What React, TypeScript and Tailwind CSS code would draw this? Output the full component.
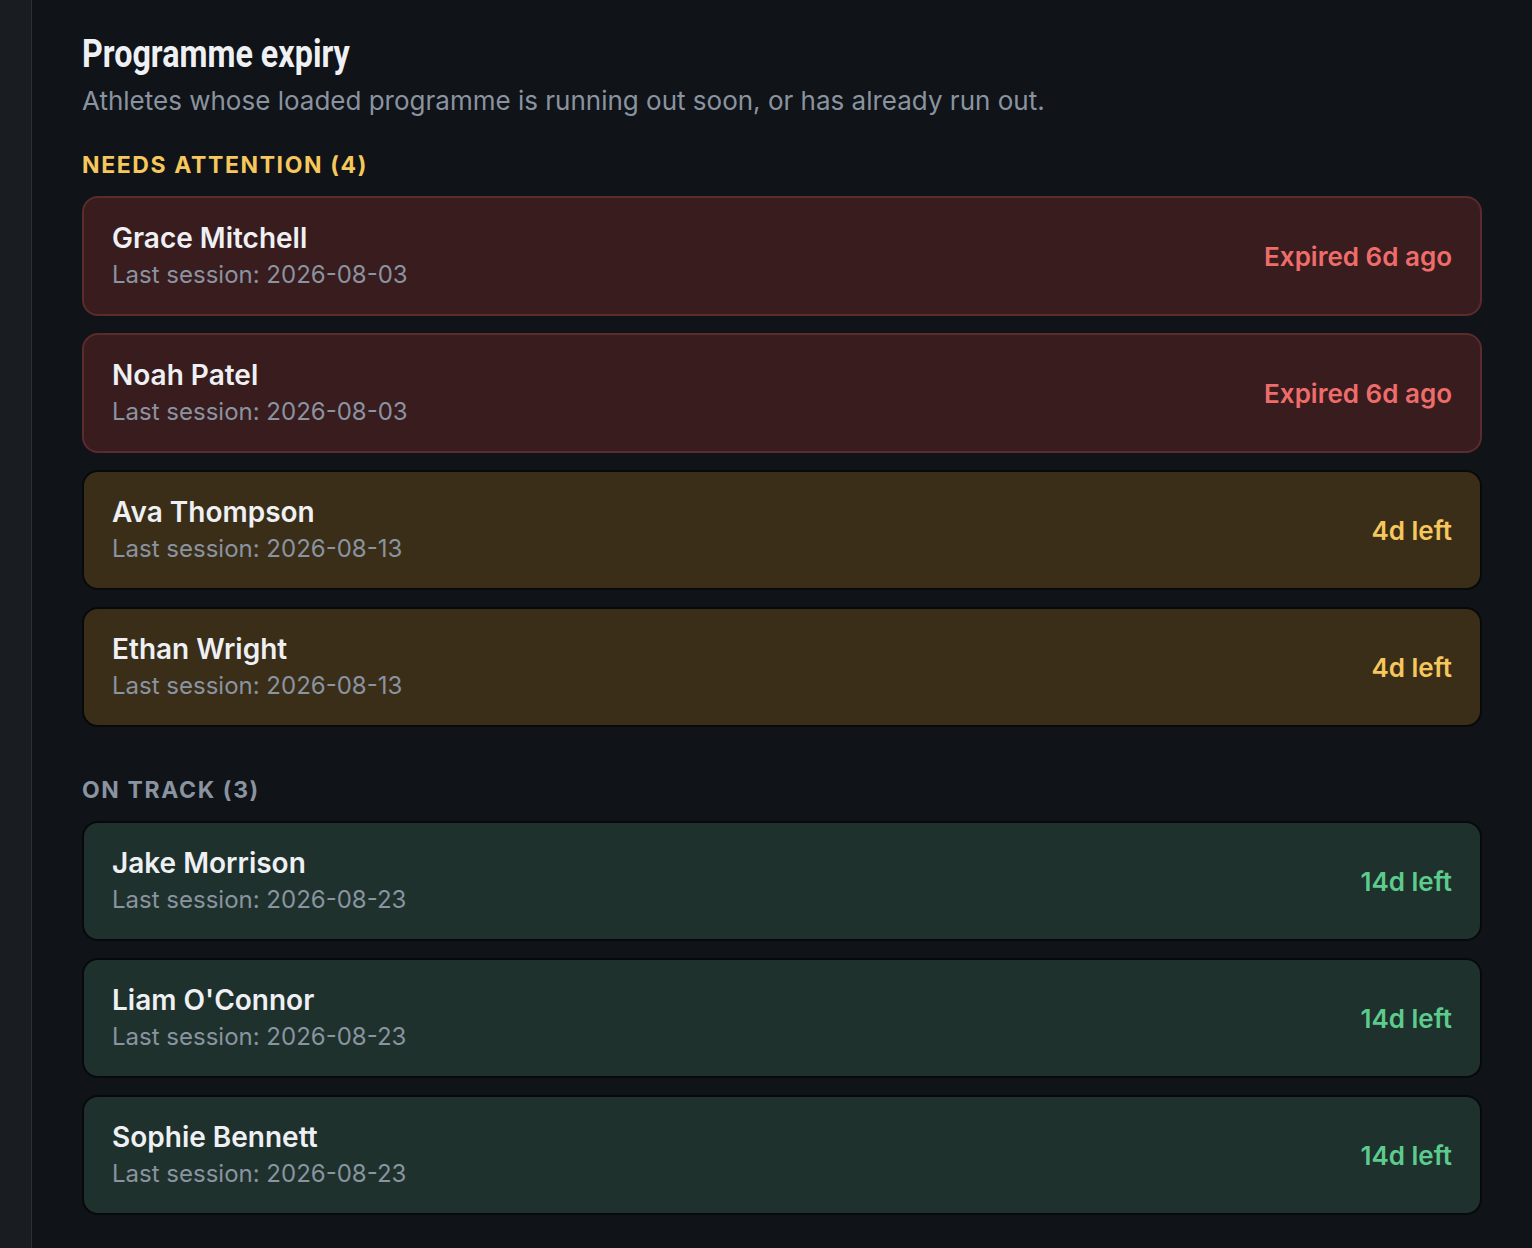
import React from 'react'

type Tone = 'red' | 'amber' | 'green'

type Athlete = {
  name: string
  lastSession: string
  status: string
  tone: Tone
}

const attention: Athlete[] = [
  { name: 'Grace Mitchell', lastSession: '2026-08-03', status: 'Expired 6d ago', tone: 'red' },
  { name: 'Noah Patel', lastSession: '2026-08-03', status: 'Expired 6d ago', tone: 'red' },
  { name: 'Ava Thompson', lastSession: '2026-08-13', status: '4d left', tone: 'amber' },
  { name: 'Ethan Wright', lastSession: '2026-08-13', status: '4d left', tone: 'amber' },
]

const onTrack: Athlete[] = [
  { name: 'Jake Morrison', lastSession: '2026-08-23', status: '14d left', tone: 'green' },
  { name: "Liam O'Connor", lastSession: '2026-08-23', status: '14d left', tone: 'green' },
  { name: 'Sophie Bennett', lastSession: '2026-08-23', status: '14d left', tone: 'green' },
]

const toneCard: Record<Tone, string> = {
  red: 'bg-[#391c1e] border-[#5b2b2d]',
  amber: 'bg-[#3a2e18] border-[#08090b]',
  green: 'bg-[#1e312c] border-[#08090b]',
}

const toneText: Record<Tone, string> = {
  red: 'text-[#ee6d6b]',
  amber: 'text-[#f6c75c]',
  green: 'text-[#5dcb8d]',
}

function AthleteRow({ athlete }: { athlete: Athlete }) {
  return (
    <div
      className={`flex items-center justify-between rounded-2xl border-2 pl-[28px] pr-[28px] h-[120px] ${toneCard[athlete.tone]}`}
    >
      <div className="flex flex-col">
        <span className="text-[28px] leading-[37px] font-semibold text-[#eef0f4]">{athlete.name}</span>
        <span className="text-[24px] leading-[35px] text-[#8a93a0]">Last session: {athlete.lastSession}</span>
      </div>
      <span className={`text-[26px] font-semibold ${toneText[athlete.tone]}`}>{athlete.status}</span>
    </div>
  )
}

function Section({ title, color, items }: { title: string; color: string; items: Athlete[] }) {
  return (
    <section>
      <h2 className={`text-[23px] leading-[32px] font-bold tracking-[0.07em] ${color}`}>{title}</h2>
      <div className="mt-[15px] flex flex-col gap-[17px]">
        {items.map((a) => (
          <AthleteRow key={a.name} athlete={a} />
        ))}
      </div>
    </section>
  )
}

export default function App() {
  return (
    <div className="flex min-h-[1248px] bg-[#101317]" style={{ fontFamily: 'Inter, "Noto Sans", sans-serif' }}>
      <aside className="w-[32px] shrink-0 bg-[#191d22] border-r border-[#2a3038]" />
      <main className="flex-1 pl-[50px] pr-[50px] pt-[30px]">
        <h1
          className="block origin-left scale-x-[0.85] text-[38px] leading-[48px] font-bold text-[#eef0f4]"
          style={{ fontFamily: 'Roboto, "DejaVu Sans Condensed", sans-serif' }}
        >
          Programme expiry
        </h1>
        <p className="mt-[7px] text-[26px] leading-[32px] text-[#8a93a0]">
          Athletes whose loaded programme is running out soon, or has already run out.
        </p>
        <div className="mt-[32px]">
          <Section title="NEEDS ATTENTION (4)" color="text-[#f6c75c]" items={attention} />
        </div>
        <div className="mt-[47px]">
          <Section title="ON TRACK (3)" color="text-[#8a93a0]" items={onTrack} />
        </div>
      </main>
    </div>
  )
}
